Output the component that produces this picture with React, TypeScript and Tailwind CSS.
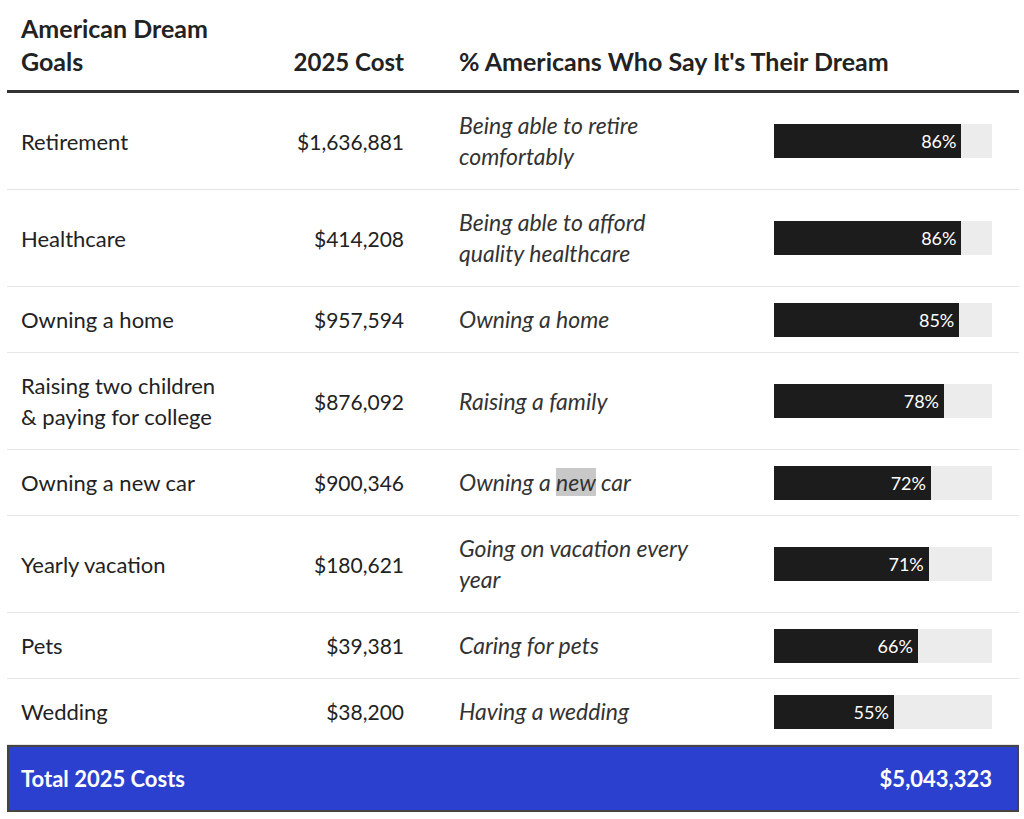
import React from "react";

interface Goal {
  name: React.ReactNode;
  cost: string;
  dream: React.ReactNode;
  pct: number;
}

const goals: Goal[] = [
  { name: "Retirement", cost: "$1,636,881", dream: "Being able to retire comfortably", pct: 86 },
  { name: "Healthcare", cost: "$414,208", dream: "Being able to afford quality healthcare", pct: 86 },
  { name: "Owning a home", cost: "$957,594", dream: "Owning a home", pct: 85 },
  { name: "Raising two children & paying for college", cost: "$876,092", dream: "Raising a family", pct: 78 },
  {
    name: "Owning a new car",
    cost: "$900,346",
    dream: (
      <>
        Owning a <span className="bg-[#c8c8c8]">new</span> car
      </>
    ),
    pct: 72,
  },
  { name: "Yearly vacation", cost: "$180,621", dream: "Going on vacation every year", pct: 71 },
  { name: "Pets", cost: "$39,381", dream: "Caring for pets", pct: 66 },
  { name: "Wedding", cost: "$38,200", dream: "Having a wedding", pct: 55 },
];

const grid = "grid grid-cols-[260px_123px_370px_218px] pl-[14px] pr-[27px]";

function Bar({ pct }: { pct: number }) {
  return (
    <div className="h-[34px] -my-[2px] w-[218px] bg-[#ececec]">
      <div
        className="h-full bg-[#1c1c1c] flex items-center justify-end pr-[5px]"
        style={{ width: `${pct}%` }}
      >
        <span className="text-[18px] text-white leading-none">{pct}%</span>
      </div>
    </div>
  );
}

export default function App() {
  return (
    <div className="min-h-screen bg-white font-['Source_Sans_Pro','Lato',sans-serif] text-[#222]">
      <div className="ml-[7px] w-[1012px]">
        <div className={`${grid} items-end pt-[12px] pb-[12px] border-b-[3px] border-[#333] text-[25px] font-bold leading-[33px]`}>
          <div>
            American Dream
            <br />
            Goals
          </div>
          <div className="text-right text-[24px]">2025 Cost</div>
          <div className="col-span-2 pl-[55px] whitespace-nowrap">% Americans Who Say It's Their Dream</div>
        </div>

        {goals.map((g) => (
          <div
            key={g.cost}
            className={`${grid} items-center py-[17px] border-b border-[#e6e6e6] leading-[31px]`}
          >
            <div className="max-w-[200px] text-[22px]">{g.name}</div>
            <div className="text-right text-[21px]">{g.cost}</div>
            <div className="pl-[55px]">
              <div className="max-w-[243px] italic text-[23px] text-[#333]">{g.dream}</div>
            </div>
            <Bar pct={g.pct} />
          </div>
        ))}

        <div className="flex items-center justify-between h-[67px] bg-[#2c40cf] border-2 border-[#444] pl-[12px] pr-[25px] text-white font-bold text-[22px]">
          <span>Total 2025 Costs</span>
          <span>$5,043,323</span>
        </div>
      </div>
    </div>
  );
}
